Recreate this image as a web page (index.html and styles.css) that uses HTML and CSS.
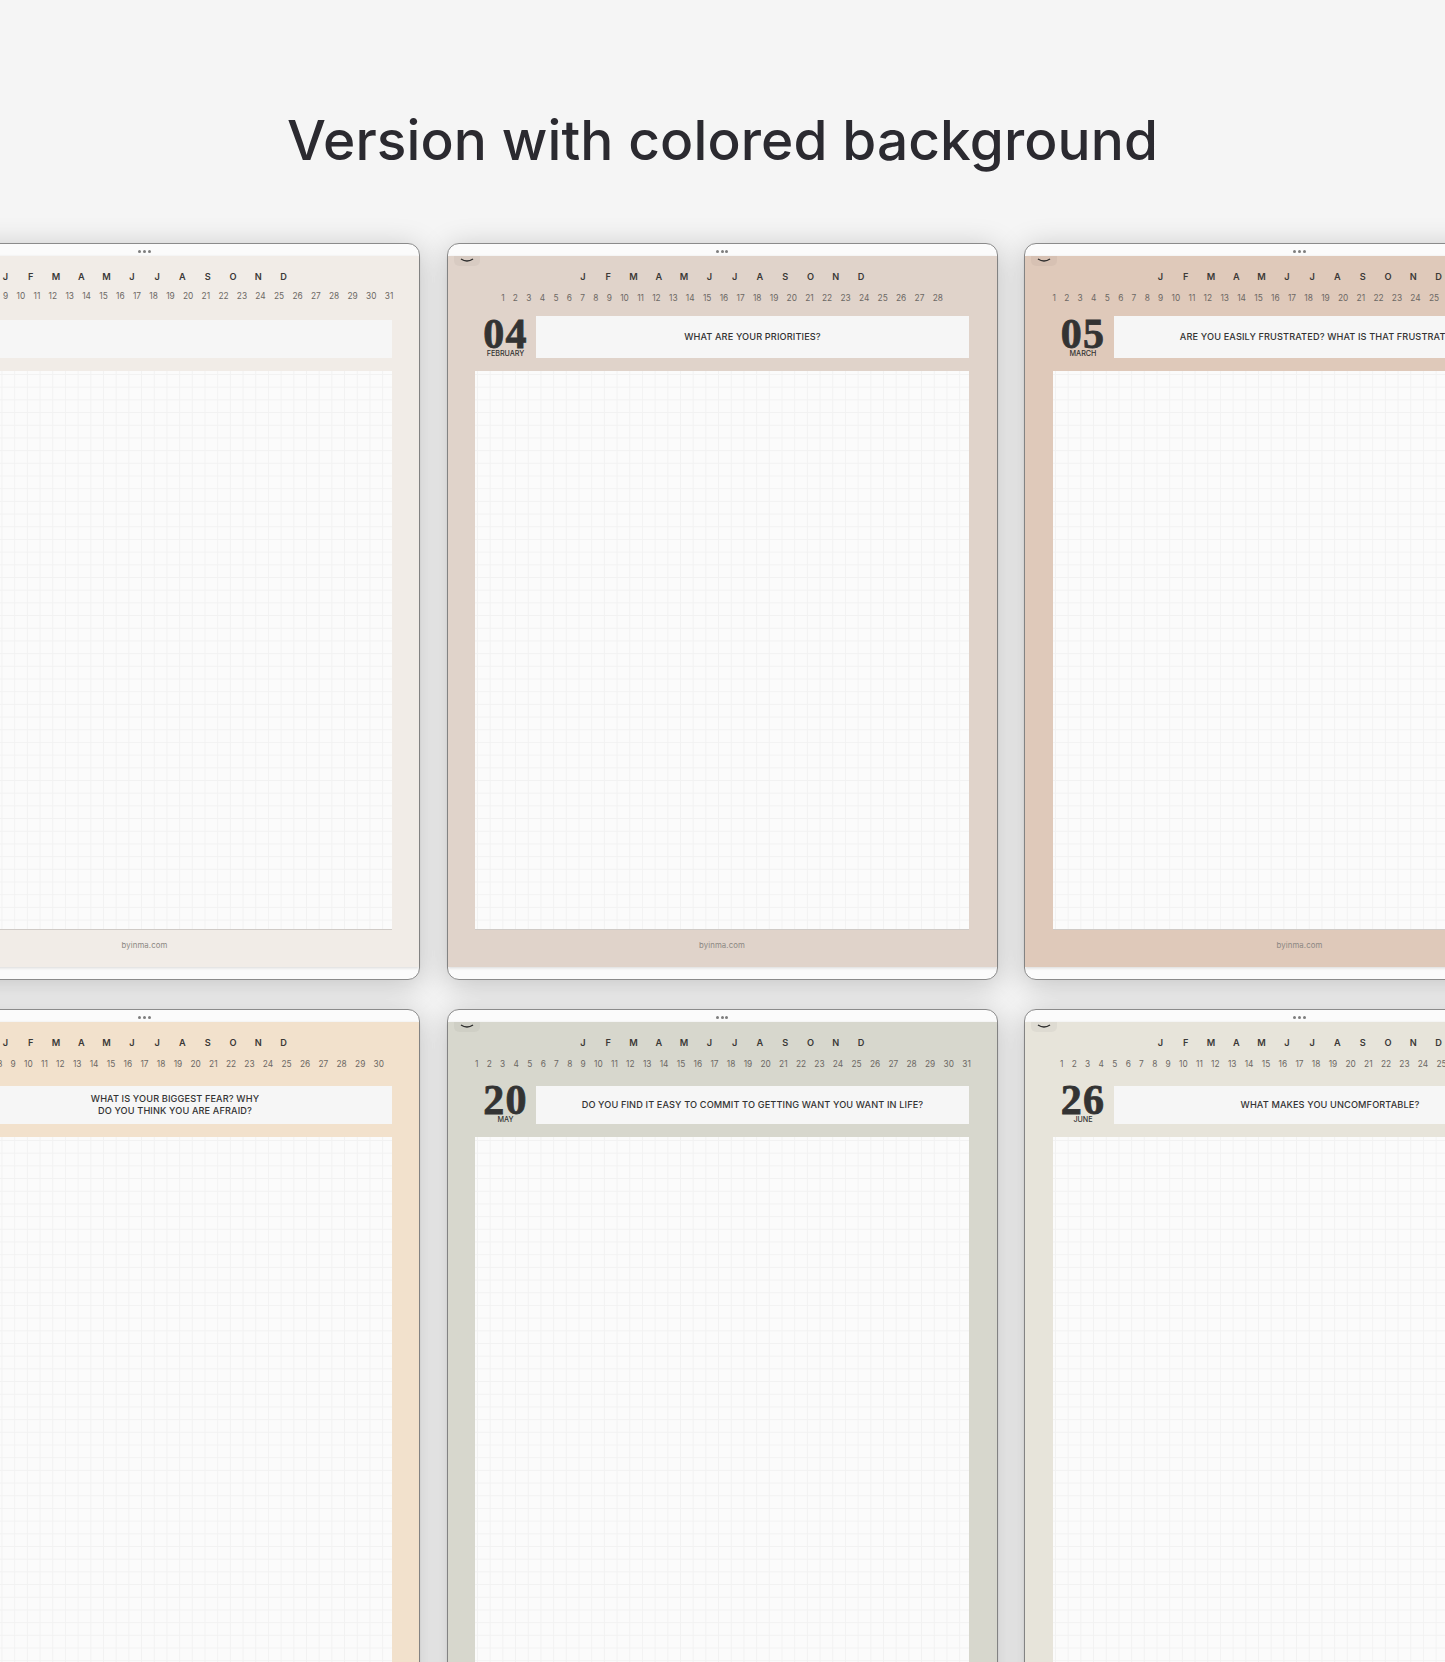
FILE: index.html
```html
<!DOCTYPE html>
<html lang="en">
<head>
<meta charset="utf-8">
<title>Version with colored background</title>
<link rel="stylesheet" href="styles.css">
</head>
<body>
<main class="page">
  <h1 class="title">Version with colored background</h1>
  <div class="cards">

    <article class="card card--linen">
      <div class="card-top"><span class="dots"><i></i><i></i><i></i></span></div>
      <div class="sheet">
        <div class="months"><span>J</span><span>F</span><span>M</span><span>A</span><span>M</span><span>J</span><span>J</span><span>A</span><span>S</span><span>O</span><span>N</span><span>D</span></div>
        <p class="days days--raised">1 2 3 4 5 6 7 8 9 10 11 12 13 14 15 16 17 18 19 20 21 22 23 24 25 26 27 28 29 30 31</p>
        <div class="head">
          <div class="date"></div>
          <div class="prompt prompt--short"></div>
        </div>
        <div class="grid-paper"></div>
        <footer class="credit">byinma.com</footer>
      </div>
      <div class="card-bottom"></div>
    </article>

    <article class="card card--blush">
      <div class="card-top"><span class="dots"><i></i><i></i><i></i></span></div>
      <span class="tab"><svg width="14" height="5" viewBox="0 0 14 5"><path d="M1 1 Q7 5 13 1" fill="none" stroke="#2b2b2b" stroke-width="1.5"/></svg></span>
      <div class="sheet">
        <div class="months"><span>J</span><span>F</span><span>M</span><span>A</span><span>M</span><span>J</span><span>J</span><span>A</span><span>S</span><span>O</span><span>N</span><span>D</span></div>
        <p class="days">1 2 3 4 5 6 7 8 9 10 11 12 13 14 15 16 17 18 19 20 21 22 23 24 25 26 27 28</p>
        <div class="head">
          <div class="date"><span class="date-num">04</span><span class="date-month">FEBRUARY</span></div>
          <div class="prompt">WHAT ARE YOUR PRIORITIES?</div>
        </div>
        <div class="grid-paper"></div>
        <footer class="credit">byinma.com</footer>
      </div>
      <div class="card-bottom"></div>
    </article>

    <article class="card card--sand">
      <div class="card-top"><span class="dots"><i></i><i></i><i></i></span></div>
      <span class="tab"><svg width="14" height="5" viewBox="0 0 14 5"><path d="M1 1 Q7 5 13 1" fill="none" stroke="#2b2b2b" stroke-width="1.5"/></svg></span>
      <div class="sheet">
        <div class="months"><span>J</span><span>F</span><span>M</span><span>A</span><span>M</span><span>J</span><span>J</span><span>A</span><span>S</span><span>O</span><span>N</span><span>D</span></div>
        <p class="days">1 2 3 4 5 6 7 8 9 10 11 12 13 14 15 16 17 18 19 20 21 22 23 24 25 26 27 28 29 30 31</p>
        <div class="head">
          <div class="date"><span class="date-num">05</span><span class="date-month">MARCH</span></div>
          <div class="prompt">ARE YOU EASILY FRUSTRATED? WHAT IS THAT FRUSTRATES YOU</div>
        </div>
        <div class="grid-paper"></div>
        <footer class="credit">byinma.com</footer>
      </div>
      <div class="card-bottom"></div>
    </article>

    <article class="card card--peach">
      <div class="card-top"><span class="dots"><i></i><i></i><i></i></span></div>
      <div class="sheet">
        <div class="months"><span>J</span><span>F</span><span>M</span><span>A</span><span>M</span><span>J</span><span>J</span><span>A</span><span>S</span><span>O</span><span>N</span><span>D</span></div>
        <p class="days">1 2 3 4 5 6 7 8 9 10 11 12 13 14 15 16 17 18 19 20 21 22 23 24 25 26 27 28 29 30</p>
        <div class="head">
          <div class="date"></div>
          <div class="prompt prompt--short">WHAT IS YOUR BIGGEST FEAR? WHY<br>DO YOU THINK YOU ARE AFRAID?</div>
        </div>
        <div class="grid-paper"></div>
        <footer class="credit">byinma.com</footer>
      </div>
      <div class="card-bottom"></div>
    </article>

    <article class="card card--sage">
      <div class="card-top"><span class="dots"><i></i><i></i><i></i></span></div>
      <span class="tab"><svg width="14" height="5" viewBox="0 0 14 5"><path d="M1 1 Q7 5 13 1" fill="none" stroke="#2b2b2b" stroke-width="1.5"/></svg></span>
      <div class="sheet">
        <div class="months"><span>J</span><span>F</span><span>M</span><span>A</span><span>M</span><span>J</span><span>J</span><span>A</span><span>S</span><span>O</span><span>N</span><span>D</span></div>
        <p class="days">1 2 3 4 5 6 7 8 9 10 11 12 13 14 15 16 17 18 19 20 21 22 23 24 25 26 27 28 29 30 31</p>
        <div class="head">
          <div class="date"><span class="date-num">20</span><span class="date-month">MAY</span></div>
          <div class="prompt prompt--short">DO YOU FIND IT EASY TO COMMIT TO GETTING WANT YOU WANT IN LIFE?</div>
        </div>
        <div class="grid-paper"></div>
        <footer class="credit">byinma.com</footer>
      </div>
      <div class="card-bottom"></div>
    </article>

    <article class="card card--stone">
      <div class="card-top"><span class="dots"><i></i><i></i><i></i></span></div>
      <span class="tab"><svg width="14" height="5" viewBox="0 0 14 5"><path d="M1 1 Q7 5 13 1" fill="none" stroke="#2b2b2b" stroke-width="1.5"/></svg></span>
      <div class="sheet">
        <div class="months"><span>J</span><span>F</span><span>M</span><span>A</span><span>M</span><span>J</span><span>J</span><span>A</span><span>S</span><span>O</span><span>N</span><span>D</span></div>
        <p class="days">1 2 3 4 5 6 7 8 9 10 11 12 13 14 15 16 17 18 19 20 21 22 23 24 25 26 27 28 29 30</p>
        <div class="head">
          <div class="date"><span class="date-num">26</span><span class="date-month">JUNE</span></div>
          <div class="prompt prompt--short">WHAT MAKES YOU UNCOMFORTABLE?</div>
        </div>
        <div class="grid-paper"></div>
        <footer class="credit">byinma.com</footer>
      </div>
      <div class="card-bottom"></div>
    </article>

  </div>
</main>
</body>
</html>
```

FILE: styles.css
```css
* { box-sizing: border-box; }

html, body {
  margin: 0;
  background: #f5f5f5;
}

body { overflow: hidden; }

.page {
  width: 1445px;
  height: 1662px;
  overflow: hidden;
  background: #f5f5f5;
  font-family: Inter, "Liberation Sans", sans-serif;
}

.title {
  margin: 0;
  padding-top: 106px;
  height: 243px;
  font-size: 55px;
  line-height: 68px;
  font-weight: 500;
  letter-spacing: .1px;
  color: #2b2a30;
  text-align: center;
  white-space: nowrap;
}

.cards {
  display: grid;
  grid-template-columns: repeat(3, 551px);
  grid-auto-rows: 737px;
  column-gap: 26.5px;
  row-gap: 29px;
  margin-left: -131px;
}

.card {
  position: relative;
  display: flex;
  flex-direction: column;
  border: 1px solid #8b8b8b;
  border-radius: 12px;
  background: #fbfbfb;
  box-shadow: 0 5px 30px rgba(0, 0, 0, .22);
}

.card--linen { --tone: #f1ece7; }
.card--blush { --tone: #e0d3ca; }
.card--sand  { --tone: #dfc9ba; }
.card--peach { --tone: #f2e1cc; }
.card--sage  { --tone: #d7d7cd; }
.card--stone { --tone: #e7e4da; }

.card-top {
  display: flex;
  align-items: center;
  justify-content: center;
  height: 12px;
  flex: none;
  padding-top: 3px;
}

.dots { display: flex; gap: 1.8px; }

.dots i {
  width: 3px;
  height: 3px;
  border-radius: 50%;
  background: #7d7d7d;
}

.tab {
  position: absolute;
  top: 12px;
  left: 6px;
  display: flex;
  justify-content: center;
  width: 26px;
  height: 10px;
  padding-top: 2px;
  border-radius: 0 0 5px 5px;
  background: rgba(0, 0, 0, .035);
}

.sheet {
  display: flex;
  flex-direction: column;
  flex: 1;
  min-height: 0;
  padding: 0 27.5px;
  background: var(--tone);
  box-shadow: 0 1px 3px rgba(0, 0, 0, .14);
}

.card-bottom { height: 12px; flex: none; }

.months {
  display: grid;
  grid-template-columns: repeat(12, 25.3px);
  justify-content: center;
  margin-top: 15px;
  font-size: 9.2px;
  line-height: 12px;
  font-weight: 600;
  color: #3b3937;
  text-align: center;
}

.days {
  margin: 8px 0 0;
  height: 14px;
  font-size: 8.3px;
  line-height: 14px;
  color: #6c6864;
  text-align: center;
  white-space: nowrap;
  word-spacing: 6px;
}

.days--raised { margin-top: 6px; margin-bottom: 2px; }

.head {
  display: flex;
  height: 42px;
  margin-top: 11px;
}

.date {
  display: flex;
  flex-direction: column;
  align-items: center;
  width: 61px;
  flex: none;
  padding-top: 4.5px;
  color: #333;
}

.date-num {
  font-family: "Liberation Serif", serif;
  font-size: 42px;
  line-height: 26px;
  font-weight: 700;
  letter-spacing: 1.2px;
  -webkit-text-stroke: .8px #333;
}

.date-month {
  margin-top: 3px;
  font-size: 7.2px;
  line-height: 8px;
  font-weight: 500;
}

.prompt {
  display: flex;
  align-items: center;
  justify-content: center;
  flex: 1;
  height: 42px;
  background: #f6f6f6;
  font-size: 9.2px;
  line-height: 12px;
  font-weight: 500;
  letter-spacing: .12px;
  color: #333;
  text-align: center;
  white-space: nowrap;
}

.prompt--short {
  height: 38.5px;
  align-self: flex-end;
}

.grid-paper {
  flex: 1;
  margin-top: 13px;
  background-color: #fbfbfb;
  background-image:
    linear-gradient(#f2f2f2 1px, transparent 1px),
    linear-gradient(90deg, #f2f2f2 1px, transparent 1px);
  background-size: 12.7px 12.7px;
  background-position: 2px 3px;
  border-bottom: 1px solid #cfcac6;
}

.credit {
  flex: none;
  height: 37px;
  padding-top: 8.5px;
  font-size: 7.8px;
  line-height: 12px;
  letter-spacing: .1px;
  color: #8b8782;
  text-align: center;
}
```
